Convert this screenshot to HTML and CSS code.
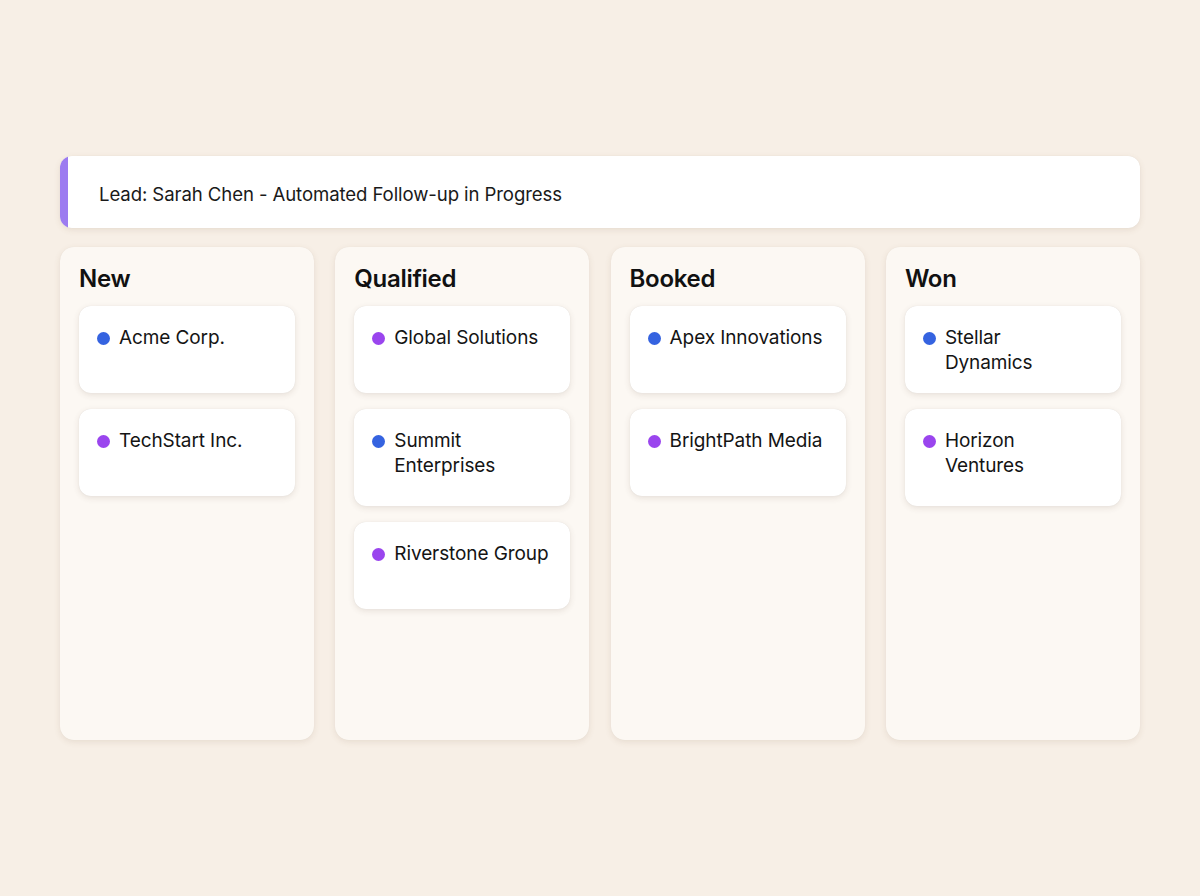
FILE: index.html
```html
<!DOCTYPE html>
<html>
<head>
<meta charset="utf-8">
<link rel="stylesheet" href="styles.css">
</head>
<body>
<div class="page">
  <div class="banner">
    <div class="banner-accent"></div>
    <div class="banner-text">Lead: Sarah Chen - Automated Follow-up in Progress</div>
  </div>
  <div class="board">
    <div class="column">
      <h2 class="col-title">New</h2>
      <div class="card"><span class="dot blue"></span><span class="name">Acme Corp.</span></div>
      <div class="card"><span class="dot purple"></span><span class="name">TechStart Inc.</span></div>
    </div>
    <div class="column">
      <h2 class="col-title">Qualified</h2>
      <div class="card"><span class="dot purple"></span><span class="name">Global Solutions</span></div>
      <div class="card"><span class="dot blue"></span><span class="name">Summit Enterprises</span></div>
      <div class="card"><span class="dot purple"></span><span class="name">Riverstone Group</span></div>
    </div>
    <div class="column">
      <h2 class="col-title">Booked</h2>
      <div class="card"><span class="dot blue"></span><span class="name">Apex Innovations</span></div>
      <div class="card"><span class="dot purple"></span><span class="name">BrightPath Media</span></div>
    </div>
    <div class="column">
      <h2 class="col-title">Won</h2>
      <div class="card compact"><span class="dot blue"></span><span class="name">Stellar<br>Dynamics</span></div>
      <div class="card"><span class="dot purple"></span><span class="name">Horizon<br>Ventures</span></div>
    </div>
  </div>
</div>
</body>
</html>
```
FILE: styles.css
```css
html, body {
  margin: 0;
  padding: 0;
}
body {
  background: #f7efe6;
  font-family: Inter, "Noto Sans", sans-serif;
  color: #141414;
  width: 1200px;
  height: 896px;
  overflow: hidden;
}
.page {
  padding: 156px 60px 0 60px;
  display: flex;
  flex-direction: column;
  gap: 19px;
}
.banner {
  height: 72px;
  background: #ffffff;
  border-radius: 12px;
  display: flex;
  align-items: center;
  overflow: hidden;
  box-shadow: 0 2px 6px rgba(120, 90, 60, 0.12), 0 0 1px rgba(0,0,0,0.08);
}
.banner-accent {
  width: 8px;
  align-self: stretch;
  background: #9c7bf0;
}
.banner-text {
  margin-left: 31px;
  padding-top: 3px;
  font-size: 18.6px;
  line-height: 24px;
  color: #1a1a1a;
  letter-spacing: -0.1px;
}
.board {
  display: grid;
  grid-template-columns: repeat(4, 254px);
  column-gap: 21.3px;
}
.column {
  height: 493px;
  box-sizing: border-box;
  background: #fcf8f3;
  border-radius: 14px;
  padding: 17px 19px 16px 19px;
  display: flex;
  flex-direction: column;
  gap: 16px;
  box-shadow: 0 2px 6px rgba(120, 90, 60, 0.12), 0 0 1px rgba(0,0,0,0.06);
}
.col-title {
  margin: 0 0 -4px 0;
  font-size: 24px;
  line-height: 30px;
  font-weight: 600;
  color: #111;
  letter-spacing: -0.3px;
}
.card {
  background: #ffffff;
  border-radius: 12px;
  min-height: 87px;
  box-sizing: border-box;
  padding: 20px 18px 28px 18px;
  display: flex;
  align-items: flex-start;
  gap: 9px;
  box-shadow: 0 2px 6px rgba(80, 60, 40, 0.12), 0 0 1px rgba(0,0,0,0.10);
}
.card.compact {
  padding-bottom: 18px;
}
.dot {
  flex: none;
  width: 13px;
  height: 13px;
  border-radius: 50%;
  margin-top: 6px;
}
.dot.blue { background: #3563e0; }
.dot.purple { background: #9a45ee; }
.name {
  font-size: 19px;
  line-height: 24.5px;
  color: #141414;
  letter-spacing: -0.1px;
}
```
